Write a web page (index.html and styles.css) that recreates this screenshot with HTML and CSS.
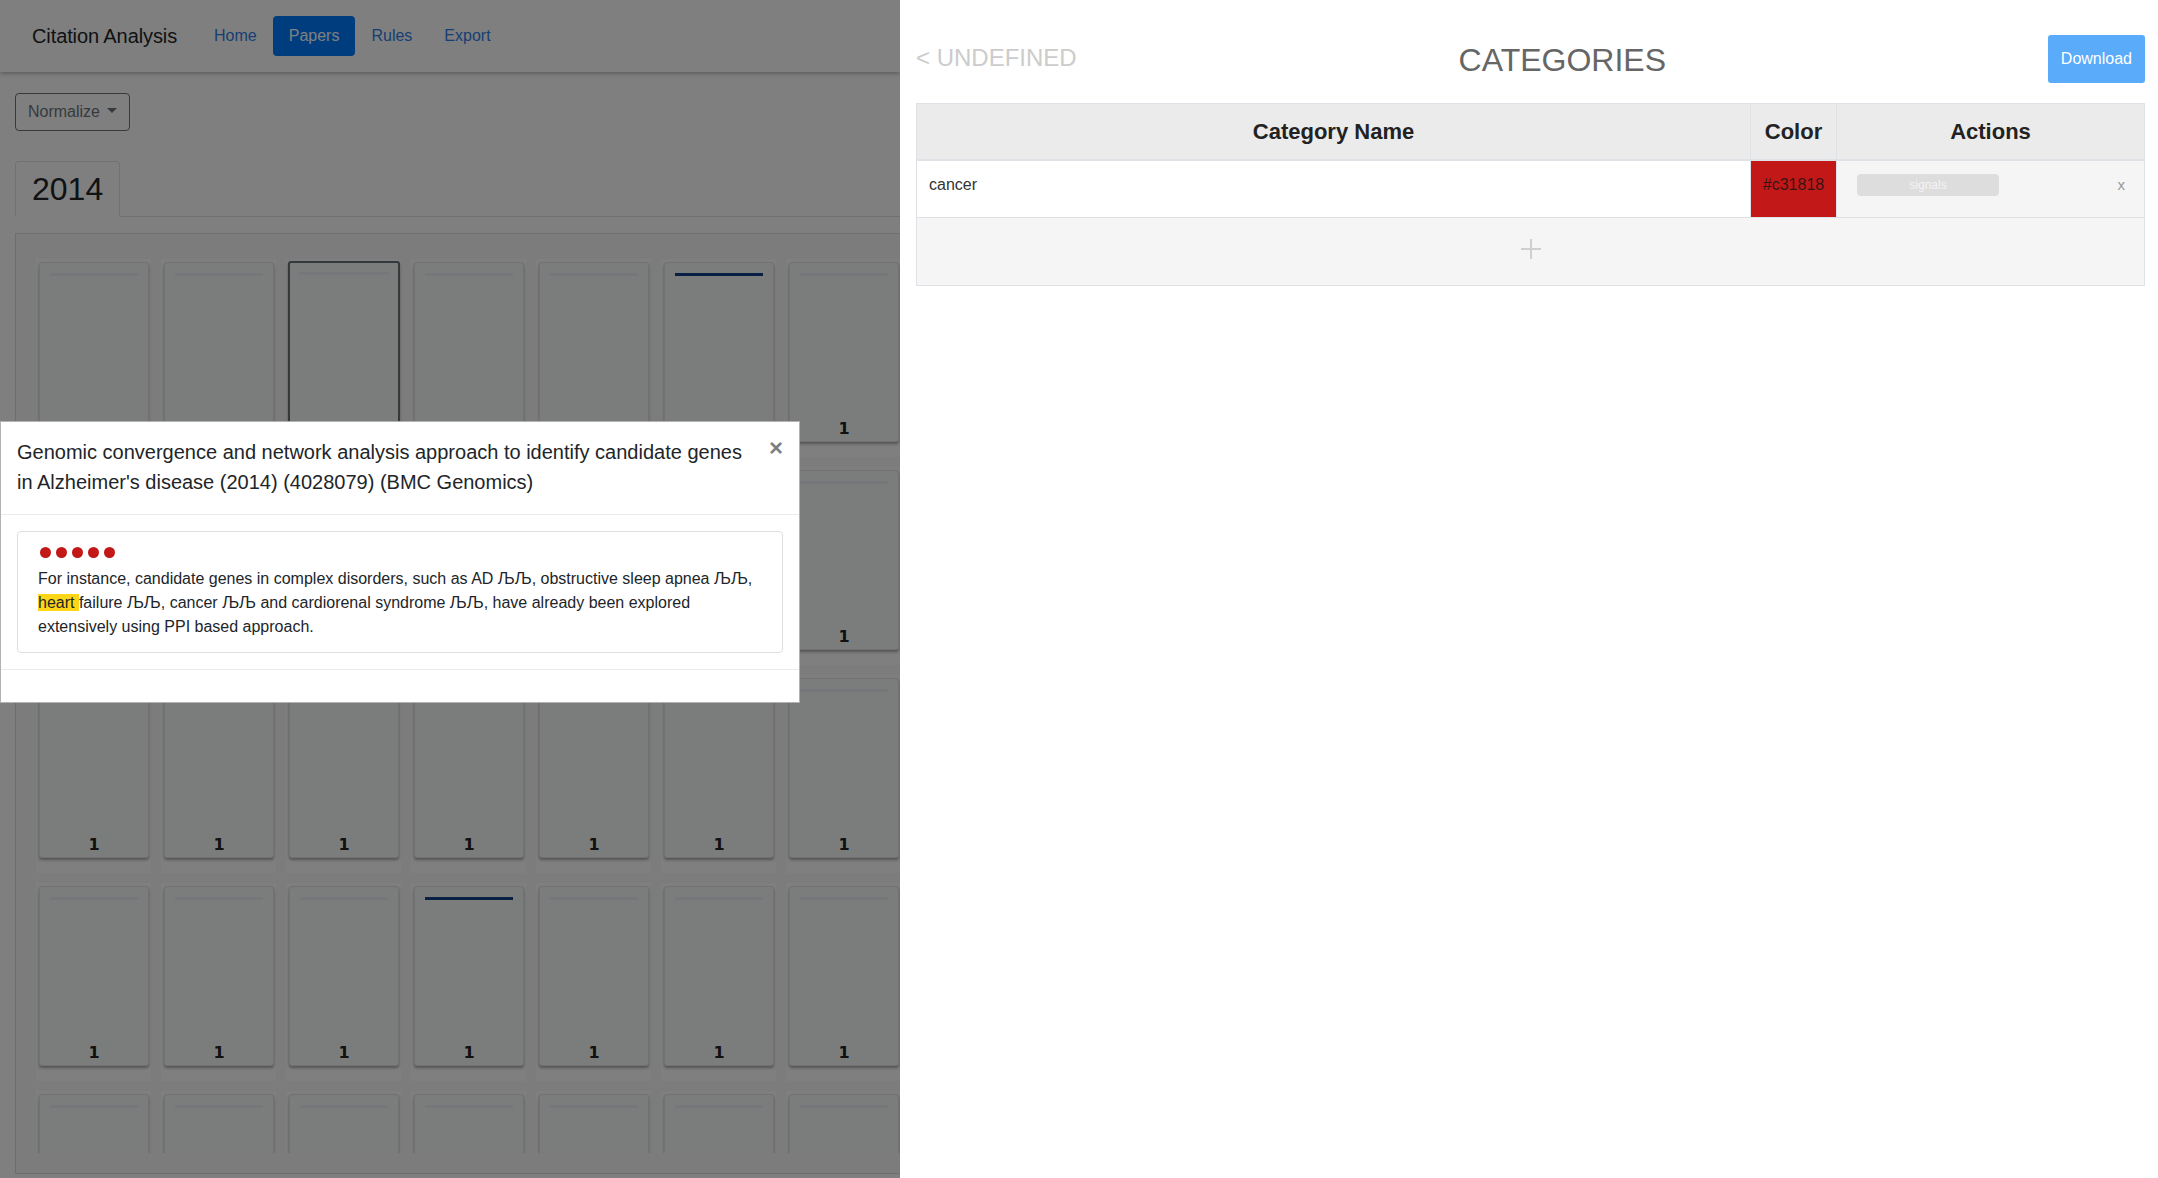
FILE: index.html
```html
<!DOCTYPE html>
<html lang="en">
<head>
<meta charset="utf-8">
<title>Citation Analysis</title>
<link rel="stylesheet" href="styles.css">
</head>
<body>
<div class="app">
  <div class="left-pane">
    <nav class="navbar">
      <span class="brand">Citation Analysis</span>
      <ul class="nav">
        <li><a class="nav-link" href="#">Home</a></li>
        <li><a class="nav-link active" href="#">Papers</a></li>
        <li><a class="nav-link" href="#">Rules</a></li>
        <li><a class="nav-link" href="#">Export</a></li>
      </ul>
    </nav>

    <div class="toolbar">
      <button class="btn-outline" type="button">Normalize <span class="caret"></span></button>
    </div>

    <div class="tabs">
      <div class="tab">2014</div>
    </div>

    <div class="grid-box">
      <div class="grid-scroll">
        <div class="grid">
          <!-- row 1 -->
          <div class="cell"><div class="paper"><div class="bar"></div><div class="count">1</div></div></div>
          <div class="cell"><div class="paper"><div class="bar"></div><div class="count">1</div></div></div>
          <div class="cell"><div class="paper selected"><div class="bar"></div><div class="count">1</div></div></div>
          <div class="cell"><div class="paper"><div class="bar"></div><div class="count">1</div></div></div>
          <div class="cell"><div class="paper"><div class="bar"></div><div class="count">1</div></div></div>
          <div class="cell"><div class="paper"><div class="bar dark"></div><div class="count">1</div></div></div>
          <div class="cell"><div class="paper"><div class="bar"></div><div class="count">1</div></div></div>
          <!-- row 2 -->
          <div class="cell"><div class="paper"><div class="bar"></div><div class="count">1</div></div></div>
          <div class="cell"><div class="paper"><div class="bar"></div><div class="count">1</div></div></div>
          <div class="cell"><div class="paper"><div class="bar"></div><div class="count">1</div></div></div>
          <div class="cell"><div class="paper"><div class="bar"></div><div class="count">1</div></div></div>
          <div class="cell"><div class="paper"><div class="bar"></div><div class="count">1</div></div></div>
          <div class="cell"><div class="paper"><div class="bar"></div><div class="count">1</div></div></div>
          <div class="cell"><div class="paper"><div class="bar"></div><div class="count">1</div></div></div>
          <!-- row 3 -->
          <div class="cell"><div class="paper"><div class="bar"></div><div class="count">1</div></div></div>
          <div class="cell"><div class="paper"><div class="bar"></div><div class="count">1</div></div></div>
          <div class="cell"><div class="paper"><div class="bar"></div><div class="count">1</div></div></div>
          <div class="cell"><div class="paper"><div class="bar"></div><div class="count">1</div></div></div>
          <div class="cell"><div class="paper"><div class="bar"></div><div class="count">1</div></div></div>
          <div class="cell"><div class="paper"><div class="bar"></div><div class="count">1</div></div></div>
          <div class="cell"><div class="paper"><div class="bar"></div><div class="count">1</div></div></div>
          <!-- row 4 -->
          <div class="cell"><div class="paper"><div class="bar"></div><div class="count">1</div></div></div>
          <div class="cell"><div class="paper"><div class="bar"></div><div class="count">1</div></div></div>
          <div class="cell"><div class="paper"><div class="bar"></div><div class="count">1</div></div></div>
          <div class="cell"><div class="paper"><div class="bar dark"></div><div class="count">1</div></div></div>
          <div class="cell"><div class="paper"><div class="bar"></div><div class="count">1</div></div></div>
          <div class="cell"><div class="paper"><div class="bar"></div><div class="count">1</div></div></div>
          <div class="cell"><div class="paper"><div class="bar"></div><div class="count">1</div></div></div>
          <!-- row 5 -->
          <div class="cell"><div class="paper"><div class="bar"></div></div></div>
          <div class="cell"><div class="paper"><div class="bar"></div></div></div>
          <div class="cell"><div class="paper"><div class="bar"></div></div></div>
          <div class="cell"><div class="paper"><div class="bar"></div></div></div>
          <div class="cell"><div class="paper"><div class="bar"></div></div></div>
          <div class="cell"><div class="paper"><div class="bar"></div></div></div>
          <div class="cell"><div class="paper"><div class="bar"></div></div></div>
        </div>
      </div>
    </div>

    <div class="backdrop"></div>

    <div class="modal">
      <div class="modal-header">
        <h5 class="modal-title">Genomic convergence and network analysis approach to identify candidate genes in Alzheimer's disease (2014) (4028079) (BMC Genomics)</h5>
        <button class="close" type="button">×</button>
      </div>
      <div class="modal-body">
        <div class="snippet">
          <div class="dots"><span class="dot"></span><span class="dot"></span><span class="dot"></span><span class="dot"></span><span class="dot"></span></div>
          <p class="snippet-text">For instance, candidate genes in complex disorders, such as AD ЉЉ, obstructive sleep apnea ЉЉ, <span class="hl">heart </span>failure ЉЉ, cancer ЉЉ and cardiorenal syndrome ЉЉ, have already been explored extensively using PPI based approach.</p>
        </div>
      </div>
      <div class="modal-footer"></div>
    </div>
  </div>

  <div class="right-pane">
    <div class="cat-header">
      <span class="back">&lt; UNDEFINED</span>
      <h2 class="cat-title">CATEGORIES</h2>
      <button class="btn-download" type="button">Download</button>
    </div>
    <table class="cat-table">
      <colgroup>
        <col>
        <col class="col-color">
        <col class="col-actions">
      </colgroup>
      <thead>
        <tr>
          <th>Category Name</th>
          <th>Color</th>
          <th>Actions</th>
        </tr>
      </thead>
      <tbody>
        <tr>
          <td class="name-cell">cancer</td>
          <td class="color-cell">#c31818</td>
          <td class="actions-cell">
            <div class="actions">
              <span class="pill">signals</span>
              <span class="remove">x</span>
            </div>
          </td>
        </tr>
        <tr>
          <td class="add-cell" colspan="3">
            <svg class="plus" width="20" height="20" viewBox="0 0 20 20"><path d="M10 0V20M0 10H20" stroke="#cfcfcf" stroke-width="2" fill="none"/></svg>
          </td>
        </tr>
      </tbody>
    </table>
  </div>
</div>
</body>
</html>
```

FILE: styles.css
```css
* { box-sizing: border-box; }

html, body {
  margin: 0;
  padding: 0;
  width: 2158px;
  height: 1178px;
  overflow: hidden;
  background: #ffffff;
  font-family: "Liberation Sans", Arial, Helvetica, sans-serif;
  font-size: 16px;
  line-height: 1.5;
  color: #212529;
}

.app {
  display: flex;
  width: 2158px;
  height: 1178px;
}

/* ---------- left pane ---------- */
.left-pane {
  position: relative;
  width: 900px;
  flex: 0 0 900px;
  height: 1178px;
  overflow: hidden;
  background: #ffffff;
}

.navbar {
  display: flex;
  align-items: center;
  height: 72px;
  padding: 0 0 0 32px;
  background: #ffffff;
  box-shadow: 0 2px 4px rgba(0, 0, 0, 0.25);
  position: relative;
  z-index: 1;
}

.brand {
  font-size: 20px;
  line-height: 30px;
  color: #212529;
  margin-right: 21px;
  letter-spacing: -0.1px;
}

.nav {
  display: flex;
  list-style: none;
  margin: 0;
  padding: 0;
}

.nav-link {
  display: block;
  padding: 8px 16px;
  line-height: 24px;
  color: #2f7ee6;
  text-decoration: none;
  border-radius: 4px;
}

.nav-link.active {
  background: #007bff;
  color: #ffffff;
}

.toolbar {
  padding: 21px 0 0 15px;
}

.btn-outline {
  display: inline-flex;
  align-items: center;
  height: 38px;
  padding: 6px 12px;
  font-family: inherit;
  font-size: 16px;
  line-height: 24px;
  color: #6c757d;
  background: transparent;
  border: 1px solid #6c757d;
  border-radius: 4px;
}

.caret {
  display: inline-block;
  margin-left: 7px;
  margin-top: -3px;
  border-top: 5px solid #6c757d;
  border-left: 5px solid transparent;
  border-right: 5px solid transparent;
}

.tabs {
  display: flex;
  margin: 30px 0 0 15px;
  width: 1200px;
  border-bottom: 1px solid #dee2e6;
}

.tab {
  margin-bottom: -1px;
  padding: 8px 16px;
  font-size: 32px;
  line-height: 38px;
  color: #212529;
  background: #ffffff;
  border: 1px solid #dee2e6;
  border-bottom-color: #ffffff;
  border-radius: 4px 4px 0 0;
}

.grid-box {
  margin: 16px 0 0 15px;
  width: 1200px;
  border: 1px solid #dcdcdc;
  background: #f9f9f9;
  padding: 25px 20px 20px;
}

.grid-scroll {
  height: 894px;
  overflow: hidden;
}

.grid {
  display: grid;
  grid-template-columns: repeat(7, 115px);
  grid-auto-rows: 198px;
  column-gap: 10px;
  row-gap: 10px;
}

.cell {
  background: #ffffff;
  padding: 3px 2px 15px 3px;
}

.paper {
  display: flex;
  flex-direction: column;
  justify-content: space-between;
  height: 180px;
  background: #f6f9f8;
  border: 1px solid #e2e4e4;
  border-radius: 3px;
  box-shadow: 0 2px 3px rgba(0, 0, 0, 0.35);
}

.paper.selected {
  border: 2px solid #6c7378;
  margin: -1px;
  height: 182px;
}

.bar {
  height: 3px;
  margin: 10px 10px 0;
  background: #eceff6;
}

.paper.selected .bar {
  margin: 9px 9px 0;
}

.bar.dark {
  background: #143e88;
}

.count {
  text-align: center;
  font-family: "DejaVu Sans", sans-serif;
  font-weight: bold;
  font-size: 16px;
  line-height: 20px;
  color: #222222;
  padding-bottom: 2px;
}

.backdrop {
  position: absolute;
  inset: 0;
  background: rgba(0, 0, 0, 0.5);
  z-index: 5;
}

.modal {
  position: absolute;
  left: 0;
  top: 421px;
  width: 800px;
  background: #ffffff;
  border: 1px solid rgba(0, 0, 0, 0.3);
  z-index: 6;
}

.modal-header {
  display: flex;
  align-items: flex-start;
  padding: 15px 16px 17px;
  border-bottom: 1px solid #e9ecef;
}

.modal-title {
  margin: 0;
  font-size: 20px;
  font-weight: 400;
  line-height: 30px;
  color: #212529;
  flex: 1;
}

.close {
  margin: -4px 0 0 12px;
  padding: 0;
  background: transparent;
  border: 0;
  font-family: "Liberation Sans", Arial, sans-serif;
  font-size: 24px;
  font-weight: 700;
  line-height: 30px;
  color: #000000;
  opacity: 0.5;
}

.modal-body {
  padding: 16px;
}

.snippet {
  border: 1px solid rgba(0, 0, 0, 0.125);
  border-radius: 4px;
  padding: 11px 20px 13px 20px;
}

.dots {
  display: flex;
  align-items: center;
  gap: 5px;
  height: 18px;
  margin: 0 0 6px 2px;
}

.dot {
  width: 11px;
  height: 11px;
  border-radius: 50%;
  background: #c31818;
}

.snippet-text {
  margin: 0;
  font-size: 16px;
  line-height: 24px;
  color: #212529;
}

.hl {
  background: #ffd617;
}

.modal-footer {
  height: 33px;
  border-top: 1px solid #e9ecef;
}

/* ---------- right pane ---------- */
.right-pane {
  flex: 1;
  padding: 0 13px 0 16px;
  background: #ffffff;
}

.cat-header {
  display: flex;
  justify-content: space-between;
  align-items: center;
  padding-top: 35px;
  height: 83px;
}

.back {
  font-size: 24px;
  line-height: 30px;
  color: #cccccc;
  margin-bottom: 2px;
}

.cat-title {
  margin: 0;
  font-size: 32px;
  font-weight: 400;
  line-height: 40px;
  color: #666666;
  margin-top: 2px;
}

.btn-download {
  height: 48px;
  padding: 0 13px;
  font-family: inherit;
  font-size: 16px;
  color: #ffffff;
  background: #5aabfa;
  border: 0;
  border-radius: 3px;
}

.cat-table {
  width: 100%;
  margin-top: 20px;
  border-collapse: collapse;
  table-layout: fixed;
  font-size: 16px;
  color: #333333;
}

.col-color { width: 86px; }
.col-actions { width: 308px; }

.cat-table th {
  padding: 11px 12px;
  font-size: 22px;
  font-weight: 700;
  line-height: 33px;
  color: #222222;
  background: #ebebeb;
  border: 1px solid #dee2e6;
  border-bottom-width: 2px;
  text-align: center;
}

.cat-table td {
  border: 1px solid #dee2e6;
  vertical-align: top;
  line-height: 24px;
}

.name-cell {
  padding: 12px 12px 20px;
  background: #ffffff;
}

.color-cell {
  padding: 12px 0 20px;
  text-align: center;
  background: #c31818;
  color: #3a1414;
  white-space: nowrap;
}

.actions-cell {
  padding: 13px 19px 19px 20px;
  background: #f5f5f5;
}

.actions {
  display: flex;
  justify-content: space-between;
  align-items: center;
  height: 22px;
}

.pill {
  display: inline-block;
  width: 142px;
  height: 22px;
  line-height: 22px;
  font-size: 12px;
  text-align: center;
  color: #f4f4f4;
  background: #dddddd;
  border-radius: 4px;
}

.remove {
  font-size: 15px;
  color: #999999;
  line-height: 22px;
}

.add-cell {
  padding: 21px 0 26px;
  background: #f5f5f5;
  text-align: center;
}

.plus {
  display: block;
  margin: 0 auto;
}
```
